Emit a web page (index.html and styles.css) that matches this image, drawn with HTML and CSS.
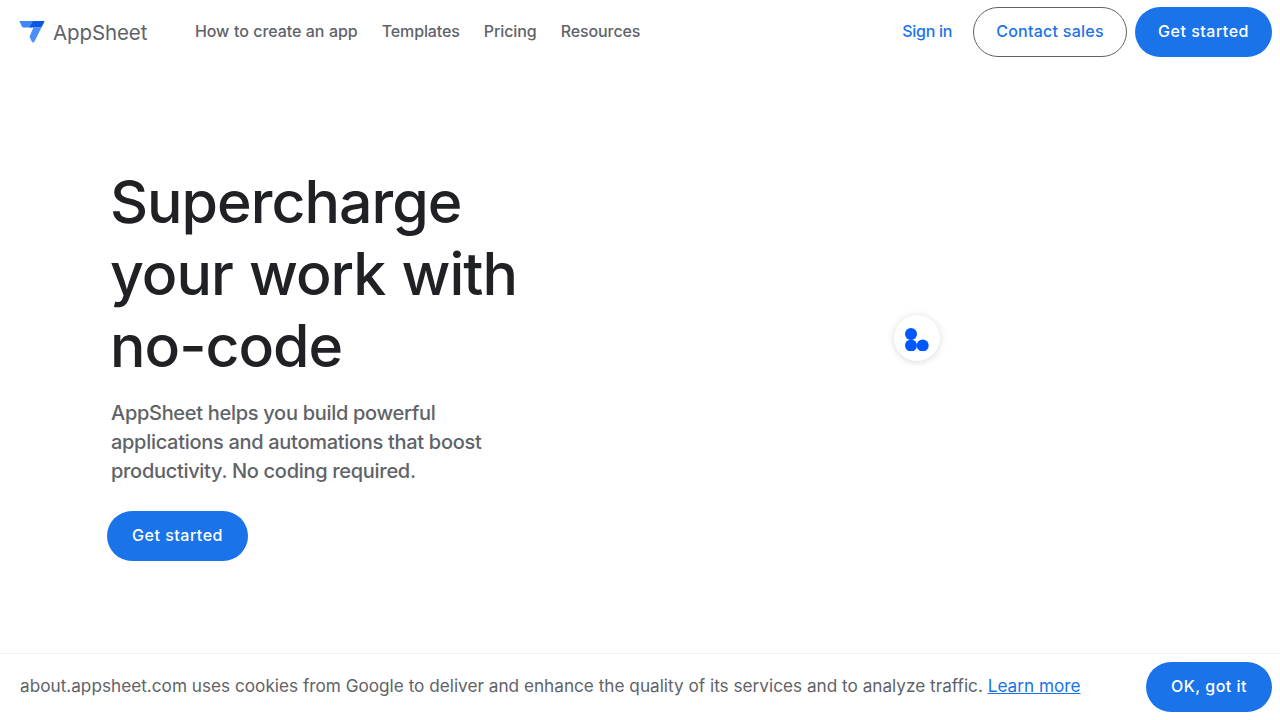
FILE: index.html
```html
<!DOCTYPE html>
<html lang="en">
<head>
<meta charset="utf-8">
<title>AppSheet</title>
<link rel="stylesheet" href="styles.css">
</head>
<body>
<header class="topbar">
  <a class="brand" href="#">
    <svg class="brand-mark" width="26" height="23" viewBox="0 0 26 23" aria-hidden="true">
      <path d="M1 1H16L12.500 7.500H4.500C3.800 7.500 3.300 7.200 3 6.700L.6 1.700C.4 1.300.6 1 1 1Z" fill="#4285f4"/>
      <path d="M14 1H25C25.400 1 25.600 1.300 25.400 1.700L22.500 7.500H10.500Z" fill="#0b57e3"/>
      <path d="M10 7.500H22.500L15.500 21.500C14.800 22.800 13.300 22.800 12.700 21.500L10.500 16.500L14.500 7.500Z" fill="#4b8ff7"/>
    </svg>
    <span class="brand-name">AppSheet</span>
  </a>
  <nav class="nav">
    <a href="#">How to create an app</a>
    <a href="#">Templates</a>
    <a href="#">Pricing</a>
    <a href="#">Resources</a>
  </nav>
  <div class="actions">
    <a class="signin" href="#">Sign in</a>
    <a class="btn btn-outline" href="#">Contact sales</a>
    <a class="btn btn-primary" href="#">Get started</a>
  </div>
</header>
<main class="hero">
  <h1>Supercharge<br>your work with<br>no-code</h1>
  <p>AppSheet helps you build powerful<br>applications and automations that boost<br>productivity. No coding required.</p>
  <a class="btn btn-primary hero-btn" href="#">Get started</a>
</main>
<div class="chip" aria-hidden="true">
  <svg width="24" height="24" viewBox="0 0 24 24">
    <circle cx="6" cy="7" r="6" fill="#0057ff"/>
    <circle cx="6" cy="18.500" r="6" fill="#0057ff"/>
    <circle cx="17.700" cy="18.500" r="6" fill="#0057ff"/>
  </svg>
</div>
<aside class="cookie">
  <span class="cookie-text">about.appsheet.com uses cookies from Google to deliver and enhance the quality of its services and to analyze traffic. <a href="#">Learn more</a></span>
  <a class="btn btn-primary" href="#">OK, got it</a>
</aside>
</body>
</html>
```
FILE: styles.css
```css
* { box-sizing: border-box; }
html, body { height: 100%; }
body {
  margin: 0;
  background: #fff;
  color: #5f6368;
  font-family: Inter, Roboto, sans-serif;
  font-size: 16px;
  overflow: hidden;
}
a { text-decoration: none; color: inherit; }
.topbar {
  display: flex;
  align-items: center;
  height: 64px;
  padding: 0 8px 0 19px;
}
.brand { display: flex; align-items: center; gap: 8px; width: 176px; }
.brand-mark { flex: none; margin-bottom: 1px; }
.brand-name { font-size: 20.500px; letter-spacing: -.1px; color: #5f6368; }
.nav {
  display: flex;
  gap: 24px;
  margin-bottom: 2px;
  font-size: 16px;
  font-weight: 500;
  letter-spacing: -.1px;
  word-spacing: .5px;
}
.actions { display: flex; align-items: center; margin-left: auto; gap: 8px; }
.signin { color: #1a73e8; font-weight: 500; margin: 0 13px 2px 0; letter-spacing: -.3px; }
.btn {
  display: inline-flex;
  align-items: center;
  justify-content: center;
  height: 50px;
  padding-bottom: 2px;
  border-radius: 25px;
  font-weight: 500;
  font-size: 16px;
}
.btn-outline { border: 1px solid #5f6368; color: #1a73e8; width: 154px; letter-spacing: .25px; }
.btn-primary { background: #1a73e8; color: #fff; width: 137px; letter-spacing: .5px; }
.hero { padding: 102px 0 0 110px; }
.hero h1 {
  margin: 0;
  color: #202124;
  font-size: 59px;
  line-height: 72px;
  font-weight: 550;
  letter-spacing: -1px;
  word-spacing: 1.500px;
}
.hero p {
  margin: 17px 0 0 1px;
  font-size: 20px;
  line-height: 29px;
  font-weight: 500;
  letter-spacing: -.3px;
}
.hero-btn { margin: 25px 0 0 -3px; width: 141px; }
.chip {
  position: absolute;
  left: 894px;
  top: 315px;
  width: 46px;
  height: 46px;
  border-radius: 50%;
  background: #fff;
  box-shadow: 0 1px 7px rgba(60, 64, 67, .2);
  display: flex;
  align-items: center;
  justify-content: center;
}
.chip svg { margin-top: 2px; }
.cookie {
  position: fixed;
  left: 0;
  right: 0;
  bottom: 0;
  height: 67px;
  padding: 0 8px 0 20px;
  display: flex;
  align-items: center;
  justify-content: space-between;
  background: #fff;
  border-top: 1px solid #f1f3f4;
  font-size: 17.200px;
}
.cookie-text { margin-bottom: 4px; }
.cookie-text a { color: #1a73e8; text-decoration: underline; }
.cookie .btn { width: 126px; }
```
